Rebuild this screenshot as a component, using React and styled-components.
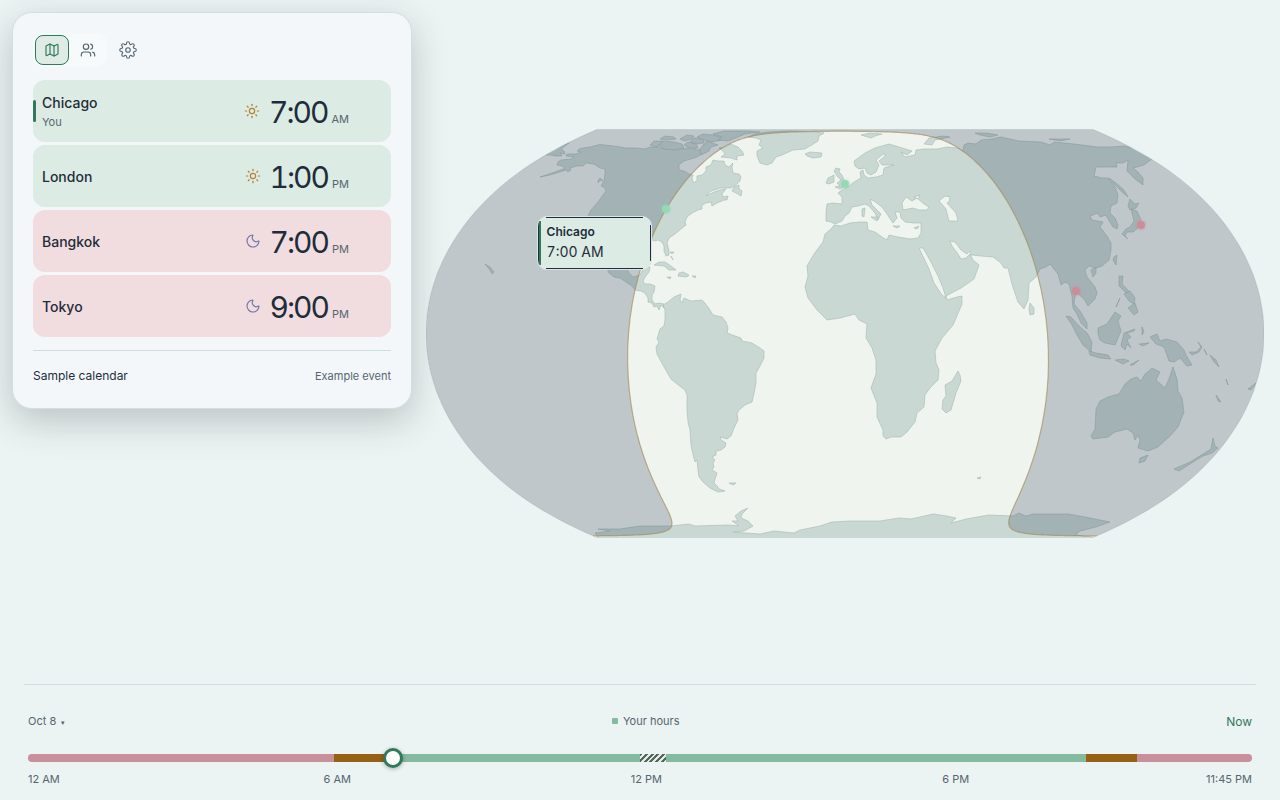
import React, { useState } from 'react'
import styled, { createGlobalStyle } from 'styled-components'
import { Map, Users, Sun, Moon } from 'lucide-react'
import { FiSettings } from 'react-icons/fi'

const GlobalStyle = createGlobalStyle`
  * {
    box-sizing: border-box;
  }

  body {
    margin: 0;
    background: #ecf3f3;
    color: #1f2d3a;
    font-family: Inter, 'Liberation Sans', sans-serif;
    font-size: 14px;
  }

  button {
    font-family: inherit;
    cursor: pointer;
  }
`

const Page = styled.div`
  display: flex;
  flex-direction: column;
  min-height: 100vh;
`

const Main = styled.main`
  flex: 1;
  display: flex;
  align-items: center;
  gap: 14px;
  padding: 0 16px 16px 12px;
`

const Panel = styled.section`
  width: 400px;
  flex: none;
  align-self: flex-start;
  margin-top: 12px;
  padding: 20px;
  background: #f3f7fa;
  border: 1px solid #d3e0e2;
  border-radius: 20px;
  box-shadow: 0 12px 36px rgba(30, 40, 40, 0.24);
`

const Toolbar = styled.div`
  display: flex;
  align-items: center;
  gap: 4px;
  margin-bottom: 13px;
`

const TabGroup = styled.div`
  display: flex;
  gap: 2px;
  padding: 2px;
  border-radius: 10px;
  background: #f7fafb;
`

const IconButton = styled.button`
  display: flex;
  align-items: center;
  justify-content: center;
  width: 34px;
  height: 30px;
  padding: 0;
  color: ${props => (props.$active ? '#2f7a5b' : '#566570')};
  background: ${props => (props.$active ? '#dfebe5' : 'transparent')};
  border: 1px solid ${props => (props.$active ? '#2f7a5b' : 'transparent')};
  border-radius: 8px;
`

const CityList = styled.ul`
  display: flex;
  flex-direction: column;
  gap: 3px;
  margin: 0;
  padding: 0;
  list-style: none;
`

const CityRow = styled.li`
  display: flex;
  align-items: center;
  height: 62px;
  padding-right: 42px;
  border-radius: 12px;
  background: ${props => (props.$awake ? '#dcebe3' : '#f1dcdf')};
`

const HomeMark = styled.span`
  width: 3px;
  height: 22px;
  border-radius: 2px;
  background: ${props => (props.$home ? '#2f7a5b' : 'transparent')};
`

const CityName = styled.div`
  flex: 1;
  padding: 2px 0 0 6px;
  font-weight: 500;
  line-height: 20px;
`

const Note = styled.div`
  color: #56666f;
  font-size: 11px;
  font-weight: 400;
  line-height: 18px;
`

const Daylight = styled.span`
  display: flex;
  margin-right: 9px;
  color: ${props => (props.$awake ? '#b5822d' : '#7079a8')};
`

const Time = styled.div`
  display: flex;
  align-items: baseline;
  gap: 4px;
  padding-top: 2px;
  font-size: 30px;
  line-height: 36px;
  letter-spacing: -2px;
  font-variant-numeric: tabular-nums;
`

const Meridiem = styled.span`
  color: #56666f;
  font-size: 11px;
  line-height: 12px;
  letter-spacing: 0;
`

const CalendarRow = styled.div`
  display: flex;
  align-items: center;
  justify-content: space-between;
  margin-top: 13px;
  padding: 16px 0 3px;
  border-top: 1px solid #cfdddf;
  font-size: 12px;
  line-height: 18px;
`

const CalendarEvent = styled.span`
  color: #56666f;
  font-size: 11px;
`

const MapBox = styled.div`
  position: relative;
  flex: 1;
  min-width: 0;

  svg {
    display: block;
    width: 100%;
  }
`

const Callout = styled.div`
  position: absolute;
  left: 13.2%;
  top: 21.3%;
  width: 115px;
  padding: 6px 9px;
  border: 1px solid #dce6e6;
  border-radius: 10px;
  background:
    linear-gradient(#1f2d3a, #1f2d3a) center top / calc(100% - 16px) 1px no-repeat,
    linear-gradient(#1f2d3a, #1f2d3a) center bottom / calc(100% - 16px) 1px no-repeat,
    linear-gradient(#1f2d3a, #1f2d3a) left center / 1px calc(100% - 12px) no-repeat,
    linear-gradient(#1f2d3a, #1f2d3a) right center / 1px calc(100% - 16px) no-repeat,
    linear-gradient(#2f7a5b, #2f7a5b) left center / 3px calc(100% - 8px) no-repeat,
    #dcebe3;
`

const CalloutName = styled.div`
  font-size: 12px;
  font-weight: 600;
  line-height: 18px;
`

const CalloutTime = styled.div`
  font-size: 14px;
  line-height: 22px;
  font-variant-numeric: tabular-nums;
`

const Footer = styled.footer`
  margin: 0 24px;
  padding: 24px 4px 14px;
  border-top: 1px solid #cfdddf;
  color: #56666f;
  font-size: 11px;
`

const FooterBar = styled.div`
  display: flex;
  align-items: center;
  justify-content: space-between;
  height: 24px;
`

const DateButton = styled.button`
  padding: 0;
  border: 0;
  background: none;
  color: inherit;
  font-size: 11px;

  span {
    margin-left: 2px;
    font-size: 7px;
  }
`

const Legend = styled.div`
  display: flex;
  align-items: center;
  gap: 5px;

  &::before {
    content: '';
    width: 6px;
    height: 6px;
    border-radius: 1px;
    background: #84bba0;
  }
`

const NowButton = styled.button`
  padding: 0;
  border: 0;
  background: none;
  color: #2f7a5b;
  font-size: 12px;
`

const Slider = styled.input`
  appearance: none;
  display: block;
  width: 100%;
  height: 20px;
  margin: 15px 0 4px;
  background: none;

  &::-webkit-slider-runnable-track {
    height: 8px;
    border-radius: 4px;
    background:
      repeating-linear-gradient(135deg, #56655f 0 2px, #dfeee2 2px 4px) 51.05% 0 / 26px 8px no-repeat,
      linear-gradient(
        to right,
        #c98f9b 25%,
        #966112 25% 29.5%,
        #84bba0 29.5% 86.45%,
        #966112 86.45% 90.6%,
        #c98f9b 90.6%
      );
  }

  &::-webkit-slider-thumb {
    appearance: none;
    width: 20px;
    height: 20px;
    margin-top: -6px;
    border: 3px solid #2f7a5b;
    border-radius: 50%;
    background: #fff;
    box-shadow: 0 1px 4px rgba(0, 0, 0, 0.3);
  }
`

const Ticks = styled.div`
  display: grid;
  grid-template-columns: 24fr 24fr 24fr 23fr 0;
  line-height: 14px;
`

const Tick = styled.span`
  display: flex;
  justify-content: ${props => props.$align || 'center'};
  width: 0;
  white-space: nowrap;
`

const cities = [
  { name: 'Chicago', time: '7:00', meridiem: 'AM', awake: true, home: true },
  { name: 'London', time: '1:00', meridiem: 'PM', awake: true },
  { name: 'Bangkok', time: '7:00', meridiem: 'PM', awake: false },
  { name: 'Tokyo', time: '9:00', meridiem: 'PM', awake: false }
]

const pins = [
  { name: 'Chicago', x: 666, y: 209, awake: true },
  { name: 'London', x: 845, y: 184, awake: true },
  { name: 'Bangkok', x: 1076, y: 291, awake: false },
  { name: 'Tokyo', x: 1141, y: 225, awake: false }
]

// land masses, already projected
const land = [
  // Chukotka across the date line
  'M569 143L565 146L561 149L564 151L565 154L560 153L562 156L555 156L551 155L546 155L555 148Z',
  // North and Central America
  'M600 144.500L590 147L580 148.500L577 151L581 152L576 154L567 154L566 156L574 157L571 159L561 160L558 162L557 165L562 166L565 168L563 169L552 173L540 177L550 175L563 171L566 170L568 172L571 170L570 168L577 166L583 166L586 163L594 164L600 168L605 169L605 174L604 181L601 186L604 187L606 191L603 195L598 202L591 210L588 216L585 230L590 250L600 262L607 269L609 273L614 277L620 278L626 282L632 286L635 290L641 291L645 293L648 298L648 302L652 303L654 307L657 306L659 310L661 305L664 308L664 304L659 303L655 304L652 300L652 295L654 292L655 286L650 284L645 284L643 281L645 277L649 272L650 267L645 267L642 271L640 275L633 277L629 273L627 268L626 255L630 245L645 240L652 240L655 241L658 240L662 242L664 246L664 251L666 256L669 255L669 250L667 243L669 238L675 234L681 229L686 225L685 222L687 217L692 213L698 210L702 209L702 205L706 203L711 202L712 206L717 203L724 200L727 200L728 196L723 197L722 194L726 189L720 190L714 192L706 196L711 191L720 188L731 188L737 184L740 181L741 177L739 174L733 173L732 167L733 163L729 167L725 165L724 161L718 161L713 160L711 165L706 167L706 171L702 175L697 176L697 180L694 183L692 179L693 175L689 174L684 171L679 170L679 165L684 161L691 159L697 157L700 155L706 152L710 147L704 144L702 149L697 150L692 147L683 149L674 148L667 149L656 147L650 147L645 149L636 148L626 148L614 146Z',
  'M732 191L734 187L739 185L739 189L742 191L741 196L736 193Z',
  // Arctic archipelago
  'M650 145L654 141L663 141L662 145L656 147Z', 'M659 145L663 141L674 142L682 144L684 148L675 150L664 149Z',
  'M660 139L665 136L674 137L676 139L667 140Z', 'M680 139L687 135L694 136L692 139L685 141Z',
  'M690 142L694 138L704 139L704 143L697 144Z', 'M684 145L688 142L696 144L698 148L689 148Z',
  'M700 149L707 141L718 145L711 147L709 151L701 155Z', 'M697 137L703 134L713 135L720 137L722 140L712 142L704 140Z',
  'M713 134L724 131L748 131L760 132L745 134L738 137L728 141L718 140L722 137Z',
  'M726 147L730 144L738 147L742 151L744 155L737 156L737 160L731 158L721 157L725 154L723 151L719 148Z',
  'M603 181L600 178L598 181L598 183L600 180Z',
  // Greenland and Iceland
  'M748 137L755 134L768 132L790 131L812 132L824 133L819 136L818 141L810 146L805 149L793 150L782 155L776 157L772 163L767 165L760 163L757 156L757 151L763 148L759 145L761 140L756 138Z',
  'M805 154L810 152L822 153L821 157L813 158L807 156Z',
  // Caribbean
  'M654 265L659 262L665 262L671 266L676 270L669 270L664 266Z', 'M679 273L683 272L689 275L687 277L678 276Z', 'M667 277L671 277L670 279Z', 'M692 276L696 276L695 278Z', 'M670 252L674 252L672 254ZM671 256L673 260Z',
  // South America
  'M663 305L668 302L674 297L681 294L680 300L682 303L684 298L691 301L702 300L704 302L708 307L713 315L722 317L726 322L728 328L727 333L735 336L741 338L742 341L752 343L760 348L764 351L764 358L760 366L756 373L756 383L754 393L752 402L745 405L739 410L737 414L738 420L734 428L731 436L727 439L720 437L721 440L726 443L725 447L721 450L716 451L716 455L712 457L715 460L713 463L714 467L712 470L717 473L715 479L714 483L717 486L719 489L725 491L718 492L710 488L703 482L699 477L698 470L697 460L695 462L692 450L691 445L690 430L688 422L687 410L687 395L685 390L677 384L671 379L664 367L657 354L656 347L659 342L657 339L660 329L664 326L665 320L665 310Z',
  'M729 483L736 483L733 485Z',
  // Europe, Asia and Africa
  'M832 228L834 225L841 226L850 223L860 222L867 222L868 230L875 232L882 237L887 240L889 235L898 237L910 239L918 238L921 233L921 223L914 223L905 222L901 218L900 212L895 212L897 218L893 223L887 214L882 207L874 201L870 199L872 205L877 210L881 214L878 220L875 213L869 206L865 204L858 206L852 207L849 213L845 216L842 221L835 224L831 222L826 221L826 212L827 204L833 203L842 204L842 197L838 193L842 190L848 187L854 182L861 178L860 172L863 170L864 175L868 178L876 177L883 175L884 168L894 165L882 165L879 161L886 155L883 154L876 160L879 165L876 172L871 175L867 173L865 168L859 169L855 166L854 161L865 153L875 148L889 144L899 147L912 151L907 155L901 152L905 157L915 155L916 150L924 149L937 149L947 147L957 148L963 151L964 145L968 143L976 144L981 140L992 139L1001 137L1010 139L1019 141L1041 142L1050 145L1054 142L1074 144L1098 147L1110 147L1124 146L1134 148L1143 153L1152 159L1144 165L1133 168L1138 172L1143 178L1143 185L1135 179L1127 171L1128 160L1123 163L1116 163L1117 167L1096 167L1094 176L1102 178L1108 178L1115 187L1118 195L1117 203L1111 206L1110 213L1115 218L1118 225L1117 229L1113 227L1108 219L1106 215L1100 217L1098 213L1090 216L1092 220L1103 222L1100 227L1107 236L1111 243L1111 250L1109 260L1102 266L1096 268L1089 266L1085 270L1087 277L1095 287L1097 293L1095 299L1088 306L1084 299L1077 293L1075 297L1074 304L1080 311L1083 316L1087 323L1087 329L1081 323L1077 314L1073 308L1072 296L1069 284L1065 282L1061 285L1058 274L1050 264L1046 267L1040 269L1036 277L1029 283L1028 300L1024 309L1018 302L1012 284L1008 268L1004 268L1001 263L993 257L981 256L971 255L970 251L967 254L961 250L955 242L950 241L952 246L958 254L961 259L966 258L970 254L973 260L979 265L974 279L961 288L946 296L947 300L957 297L962 296L962 304L953 325L942 338L935 351L936 363L939 370L938 380L930 388L925 395L924 407L917 413L915 422L907 432L901 437L891 437L886 439L883 436L883 430L877 417L877 403L871 388L876 374L876 360L872 348L866 338L867 324L859 320L855 314L840 318L827 320L817 310L808 298L805 287L808 276L807 266L814 254L823 242L825 234Z',
  // British Isles
  'M835 187L840 186L837 183L841 180L837 176L834 171L836 168L840 169L839 172L842 175L844 180L848 182L846 186L840 189Z', 'M826 183L828 178L834 175L834 182L829 184Z',
  'M861 135L870 133L882 134L875 136L871 138Z', 'M924 144L929 138L943 136L950 137L935 140L932 145Z', 'M975 133L986 133L998 135L990 137L980 135Z', 'M1049 139L1070 139L1060 141Z',
  'M871 217L878 217L877 221ZM862 209L865 208L864 217L862 216Z', 'M893 226L900 226L897 228ZM914 228L919 226L917 229Z',
  'M1030 303L1034 308L1034 314L1030 315L1029 309Z', 'M958 371L960 375L961 381L956 393L951 410L946 413L942 409L943 400L946 396L945 385L952 381Z',
  // Sakhalin, Japan, Taiwan, Hainan
  'M1109 178L1116 183L1124 190L1128 197L1122 192L1114 184Z', 'M1128 206L1130 199L1135 204L1139 203L1136 208L1130 210Z', 'M1131 209L1137 211L1141 220L1139 227L1133 232L1127 232L1125 236L1128 239L1122 234L1126 229L1130 227L1134 221Z',
  'M1114 257L1117 255L1116 265L1113 260Z', 'M1091 270L1096 267L1096 273L1093 277Z',
  // Philippines and Indonesia
  'M1119 276L1123 276L1122 284L1126 288L1131 294L1126 293L1119 286Z', 'M1124 294L1130 291L1135 298L1134 304L1129 301Z', 'M1128 308L1135 303L1138 312L1134 315Z', 'M1120 298L1116 307Z',
  'M1066 316L1071 317L1079 326L1087 333L1092 342L1091 352L1083 345L1077 335L1072 325Z', 'M1089 351L1096 353L1108 355L1111 359L1100 358L1090 355Z',
  'M1098 328L1107 324L1115 312L1121 316L1118 321L1121 331L1115 345L1105 343L1100 340L1098 333Z', 'M1124 333L1135 329L1134 331L1127 333L1131 337L1127 340L1131 348L1127 344L1125 350L1121 346Z',
  'M1115 360L1124 359L1129 361L1123 364ZM1130 365L1139 360L1133 365ZM1142 327L1144 332L1142 335ZM1139 344L1149 343L1143 346Z',
  'M1150 337L1157 334L1160 341L1166 339L1177 342L1184 350L1186 355L1192 365L1187 366L1180 358L1174 362L1169 361L1164 347L1156 344Z', 'M1189 352L1196 352L1201 347L1198 342L1202 347L1199 352L1192 355Z', 'M1204 349L1207 355ZM1210 355L1216 360L1219 367L1214 362ZM1226 379L1228 385ZM1216 395L1221 402L1218 401ZM1248 389L1256 383L1251 390Z',
  // Australia and New Zealand
  'M1137 377L1141 381L1145 374L1150 370L1152 368L1160 372L1156 380L1165 388L1169 379L1173 367L1177 379L1178 391L1182 398L1184 412L1178 427L1169 437L1158 447L1148 451L1138 448L1140 440L1138 435L1135 440L1133 433L1127 429L1115 432L1108 437L1093 439L1091 436L1095 429L1096 409L1100 401L1108 397L1119 394L1125 384L1131 379Z',
  'M1140 458L1148 455L1145 461L1139 463Z', 'M1213 438L1215 446L1218 448L1212 453L1203 456L1190 464L1179 471L1174 469L1190 462L1203 454L1211 449Z',
  'M485 264L488 266L490 267L494 272L492 274L490 270Z', 'M977 478L981 477L980 479Z',
  // Antarctica
  'M595 533L610 531L598 529L620 529L640 526L671 526L689 524L695 526L728 525L739 526L732 521L738 521L735 516L741 511L748 508L742 514L741 518L748 521L753 526L744 531L733 532L760 534L774 531L794 533L800 530L820 526L832 522L850 521L880 521L899 518L911 519L933 514L947 516L956 518L951 523L966 519L989 515L1013 516L1019 513L1026 516L1033 514L1068 514L1085 517L1110 522L1096 527L1080 531L1075 535L1092 537L1092 540L600 540Z'
]

// inland seas cut out of the land
const seas = [
  'M919 248L923 248L931 262L938 276L943 288L946 298L942 295L934 283L929 269Z',
  'M903 210L902 203L906 197L912 201L917 198L924 204L929 207L927 210L919 210L913 208Z',
  'M939 201L945 196L950 197L949 202L947 203L956 213L958 221L949 221L946 209Z',
  'M914 197L920 195L918 199Z'
]

const CENTER = [845, 333.5]
const SCALE = 154.8
const RAD = Math.PI / 180

// Equal Earth projection
const project = (lon, lat) => {
  const t = Math.asin((Math.sqrt(3) / 2) * Math.sin(lat * RAD))
  const t2 = t * t
  const t6 = t2 * t2 * t2
  const x = (2 * lon * RAD * Math.cos(t)) /
    (Math.sqrt(3) * (1.340264 - 3 * 0.081106 * t2 + t6 * (7 * 0.000893 + 9 * 0.003796 * t2)))
  const y = t * (1.340264 - 0.081106 * t2 + t6 * (0.000893 + 0.003796 * t2))
  return `${(CENTER[0] + x * SCALE).toFixed(1)} ${(CENTER[1] - y * SCALE).toFixed(1)}`
}

const range = (from, to, step) => {
  const n = Math.round(Math.abs(to - from) / step)
  return Array.from({ length: n + 1 }, (_, i) => from + ((to - from) * i) / n)
}

const rightEdge = range(-90, 90, 2).map(lat => project(180, lat))
const leftEdge = range(90, -90, 2).map(lat => project(-180, lat))
const sphere = `M${[...rightEdge, ...leftEdge].join('L')}Z`

const sun = { lon: -3, lat: -6 }
const shadeLat = lon => Math.atan(-Math.cos((lon - sun.lon) * RAD) / Math.tan(sun.lat * RAD)) / RAD
const terminator = range(-180, 180, 0.5).map(lon => project(lon, shadeLat(lon)))
const night = `M${[
  ...terminator,
  ...range(-84, 90, 2).map(lat => project(180, lat)),
  ...range(90, -84, 2).map(lat => project(-180, lat))
].join('L')}Z`

const WorldMap = () => (
  <svg viewBox="426 129 838 410" role="img" aria-label="World map with day and night">
    <clipPath id="globe">
      <path d={sphere} />
    </clipPath>
    <path d={sphere} fill="#eff4ee" stroke="#c9d8d6" />
    <g clipPath="url(#globe)">
      <g fill="#c9d8d3" stroke="#a6b9b5" strokeWidth="0.6" strokeLinejoin="round">
        {land.map(d => <path key={d} d={d} />)}
        {seas.map(d => <path key={d} d={d} fill="#eff4ee" />)}
      </g>
      <path d={night} fill="rgb(43, 60, 86)" fillOpacity="0.24" />
      <path d={`M${terminator.join('L')}`} fill="none" stroke="#a58c58" strokeOpacity="0.65" strokeWidth="1.2" />
    </g>
    {pins.map(pin => (
      <g key={pin.name} fill={pin.awake ? '#97d8b5' : '#cc8c9a'}>
        <circle cx={pin.x} cy={pin.y} r="6" opacity="0.2" />
        <circle cx={pin.x} cy={pin.y} r="4" />
      </g>
    ))}
  </svg>
)

const City = ({ name, time, meridiem, awake, home }) => (
  <CityRow $awake={awake}>
    <HomeMark $home={home} />
    <CityName>
      {name}
      {home && <Note>You</Note>}
    </CityName>
    <Daylight $awake={awake}>
      {awake ? <Sun size={16} strokeWidth={1.75} /> : <Moon size={16} strokeWidth={1.75} />}
    </Daylight>
    <Time>
      {time}
      <Meridiem>{meridiem}</Meridiem>
    </Time>
  </CityRow>
)

export default function App() {
  const [view, setView] = useState('map')
  const [minutes, setMinutes] = useState(420)

  return (
    <Page>
      <GlobalStyle />
      <Main>
        <Panel>
          <Toolbar>
            <TabGroup>
              <IconButton aria-label="Map" $active={view === 'map'} onClick={() => setView('map')}>
                <Map size={16} strokeWidth={1.75} />
              </IconButton>
              <IconButton aria-label="People" $active={view === 'people'} onClick={() => setView('people')}>
                <Users size={16} strokeWidth={1.75} />
              </IconButton>
            </TabGroup>
            <IconButton aria-label="Settings">
              <FiSettings size={18} strokeWidth={1.5} />
            </IconButton>
          </Toolbar>
          <CityList>
            {cities.map(city => <City key={city.name} {...city} />)}
          </CityList>
          <CalendarRow>
            <span>Sample calendar</span>
            <CalendarEvent>Example event</CalendarEvent>
          </CalendarRow>
        </Panel>
        <MapBox>
          <WorldMap />
          <Callout>
            <CalloutName>Chicago</CalloutName>
            <CalloutTime>7:00 AM</CalloutTime>
          </Callout>
        </MapBox>
      </Main>
      <Footer>
        <FooterBar>
          <DateButton>Oct 8 <span>▾</span></DateButton>
          <Legend>Your hours</Legend>
          <NowButton onClick={() => setMinutes(420)}>Now</NowButton>
        </FooterBar>
        <Slider
          type="range"
          aria-label="Time of day"
          min="0"
          max="1425"
          step="15"
          value={minutes}
          onChange={e => setMinutes(Number(e.target.value))}
        />
        <Ticks>
          <Tick $align="flex-start">12 AM</Tick>
          <Tick>6 AM</Tick>
          <Tick>12 PM</Tick>
          <Tick>6 PM</Tick>
          <Tick $align="flex-end">11:45 PM</Tick>
        </Ticks>
      </Footer>
    </Page>
  )
}
